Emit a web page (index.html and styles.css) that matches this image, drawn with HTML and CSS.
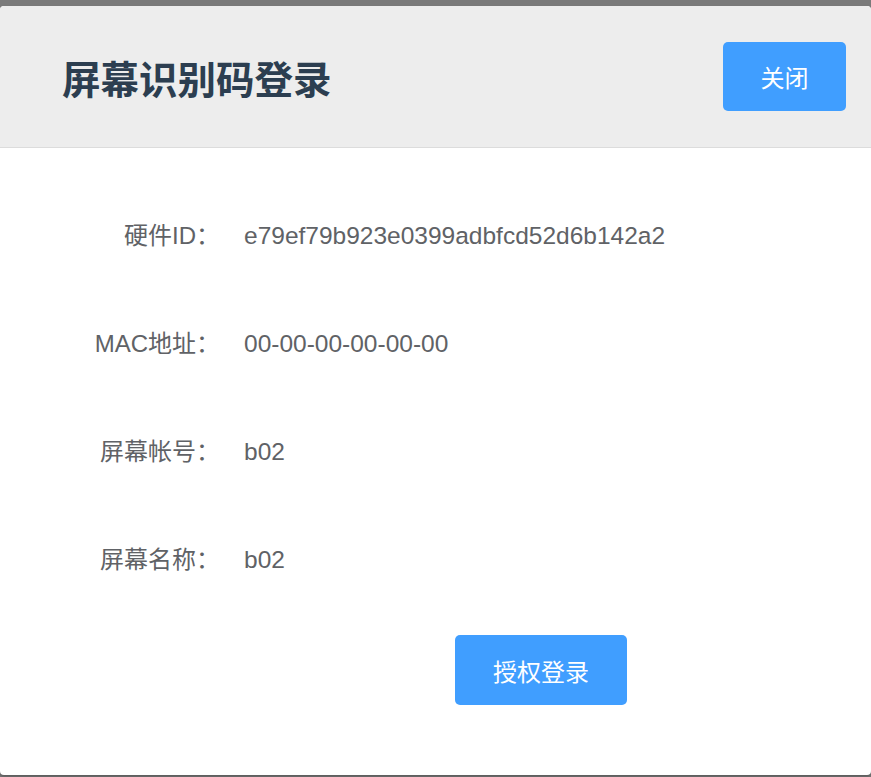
FILE: index.html
```html
<!DOCTYPE html>
<html lang="zh-CN">
<head>
  <meta charset="UTF-8">
  <meta name="viewport" content="width=device-width, initial-scale=1.0">
  <title>屏幕识别码登录</title>
  <link rel="stylesheet" href="styles.css">
</head>
<body>
  <div class="dialog">
    <div class="dialog-header">
      <h2>屏幕识别码登录</h2>
      <button class="btn" onclick="closeDialog()">关闭</button>
    </div>
    <div class="dialog-body">
      <div class="info-list">
        <div class="label">硬件ID：</div>
        <div class="value">e79ef79b923e0399adbfcd52d6b142a2</div>
        <div class="label">MAC地址：</div>
        <div class="value">00-00-00-00-00-00</div>
        <div class="label">屏幕帐号：</div>
        <div class="value">b02</div>
        <div class="label">屏幕名称：</div>
        <div class="value">b02</div>
      </div>
      <div class="actions">
        <button class="btn btn-login" onclick="login()">授权登录</button>
      </div>
    </div>
  </div>

  <script>
    function closeDialog() {
      document.querySelector('.dialog').classList.toggle('hidden');
    }

    function login() {
      console.log('login');
    }
  </script>
</body>
</html>
```

FILE: styles.css
```css
* {
  margin: 0;
  padding: 0;
  box-sizing: border-box;
}
body {
  font-family: "Liberation Sans", "Noto Sans CJK SC", sans-serif;
  background: #7a7a7a;
  height: 100vh;
  padding-top: 6px;
}
.dialog {
  background: #fff;
  height: 769px;
  border-radius: 4px;
  overflow: hidden;
  box-shadow: 0 2px 3px rgba(0, 0, 0, 0.25);
}
.dialog.hidden {
  display: none;
}
.dialog-header {
  height: 142px;
  background: #ededed;
  border-bottom: 1px solid #dcdcdc;
  display: flex;
  justify-content: space-between;
  align-items: center;
  padding: 0 25px 0 62px;
}
.dialog-header h2 {
  font-size: 38.5px;
  font-weight: bold;
  color: #2c3e50;
}
.btn {
  background: #409eff;
  color: #fff;
  border: none;
  border-radius: 5px;
  font-family: "Liberation Sans", "Noto Sans CJK SC", sans-serif;
  font-size: 24px;
  width: 123px;
  height: 69px;
  cursor: pointer;
}
.dialog-body {
  padding-top: 34px;
}
.info-list {
  display: grid;
  grid-template-columns: 220px 1fr;
  column-gap: 24px;
  grid-auto-rows: 108px;
  align-items: center;
  font-size: 24px;
  line-height: 30px;
  color: #606266;
}
.label {
  text-align: right;
}
.value {
  font-size: 24.5px;
}
.actions {
  padding: 21px 0 0 455px;
}
.btn-login {
  width: 172px;
  height: 70px;
}
```
